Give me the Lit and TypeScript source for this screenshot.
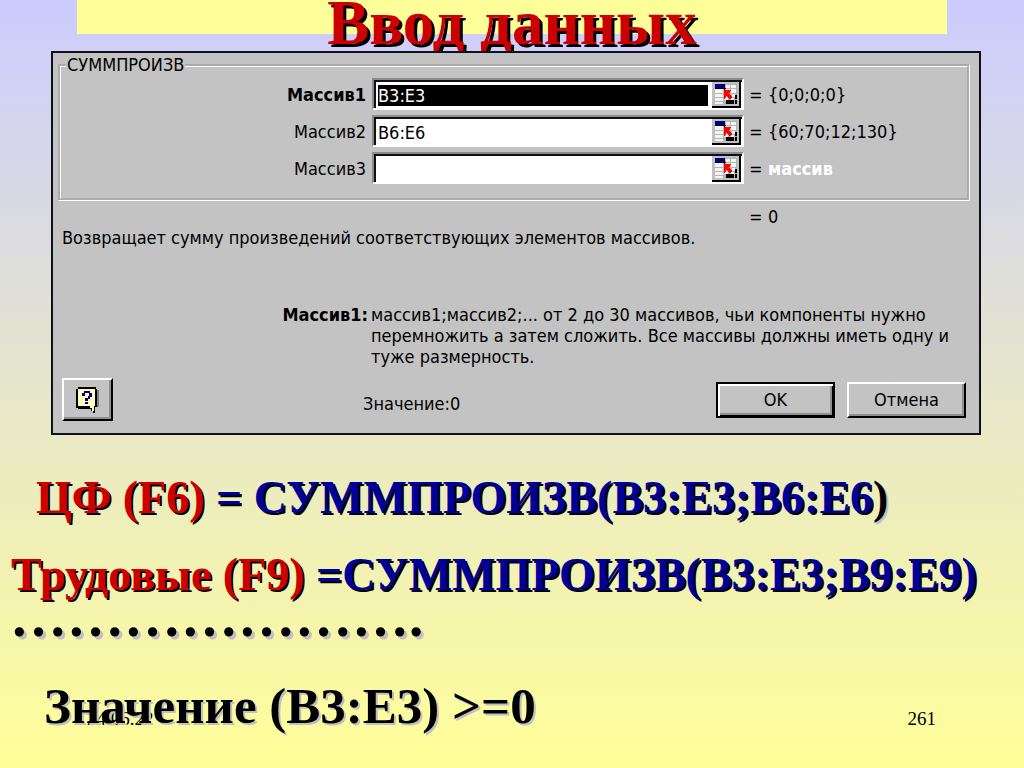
import { LitElement, html, css, svg } from "lit";
import { customElement } from "lit/decorators.js";

interface Argument {
  name: string;
  value: string;
  result: string;
  state: string;
}

const ARGUMENTS: Argument[] = [
  { name: "Массив1", value: "B3:E3", result: "{0;0;0;0}", state: "required" },
  { name: "Массив2", value: "B6:E6", result: "{60;70;12;130}", state: "" },
  { name: "Массив3", value: "", result: "массив", state: "empty" },
];

const rangeIcon = svg`
  <rect width="27" height="24" fill="#c0c0c0"/>
  <rect x="3" y="2" width="22" height="20" fill="#b4b4b4"/>
  <path fill="#f4f4f4" d="M3 7h8v4H3zM3 12h8v3H3zM3 16h8v3H3zM3 20h8v2H3zM14 3h4v3h-4zM19 3h5v3h-5zM14 7h4v3h-4zM19 7h5v4h-5zM20 12h3v3h-3zM12 12h4v6h-4zM19 16h3v2h-3z"/>
  <path fill="#000080" d="M3 2h10v4H3z"/>
  <path fill="#000" d="M3 6h11v1H3zM12 4h1v5h-1zM14 18h8v4h-8zM23 13h2v4h-2zM23 18h2v4h-2z"/>
  <path fill="#f00" d="M12 8h7v1h-1v2h-1v1h1v1h1v1h1v2h-1v1h-2v-1h-1v-1h-1v-1h-1v2h-1v1h-1z"/>`;

const helpIcon = svg`
  <path fill="#808080" d="M4 3h19v17H4z"/>
  <path fill="#000" d="M2 0h18v2h1v18h-2v6h-2v-2h-2v-2H2v-1H0V2h2z"/>
  <path fill="#ffffb8" d="M2 2h17v17h-1v5h-2v-3h-2v-2H2z"/>
  <path fill="#fff" d="M4 3h2v2H4zM3 8h2v2H3zM5 13h2v2H5zM9 18h3v1H9zM15 14h2v2h-2zM16 9h2v2h-2zM15 3h2v2h-2z"/>
  <path fill="#000080" d="M6 6h2V4h6v2h2v4h-2v2h-2v2H9v-3h3V9h1V6H9v3H6zM9 15h3v2H9z"/>`;

@customElement("app-root")
export class AppRoot extends LitElement {
  static styles = css`
    :host {
      display: block;
    }
    * {
      box-sizing: border-box;
    }
    .slide {
      position: relative;
      isolation: isolate;
      display: flow-root;
      min-height: 100vh;
      background: linear-gradient(#ccccff, #ffff99);
      font-family: "Liberation Serif", serif;
      overflow: hidden;
    }
    .band {
      display: flex;
      justify-content: center;
      align-items: flex-end;
      height: 34px;
      margin: 0 77px;
      background: #ffff99;
    }
    .title {
      flex: none;
      margin: 0 0 -12px;
      line-height: 46px;
      font-size: 63px;
      color: #cc0000;
      text-shadow: 3px 3px 0 #000;
      white-space: nowrap;
    }
    .dialog {
      position: relative;
      margin: 17px 43px 0 51px;
      padding: 4px 9px 12px 5px;
      border: 2px solid #101018;
      background: #c3c3c3;
      color: #000;
      font: 18px/21px "DejaVu Sans Condensed", "DejaVu Sans", sans-serif;
      font-stretch: condensed;
    }
    .group {
      margin: 0;
      padding: 5px 0 14px;
      border: 3px groove #fff;
      min-width: 0;
    }
    .legend {
      margin-left: 5px;
      padding: 0 1px;
      line-height: 16px;
    }
    .row {
      display: grid;
      grid-template-columns: 311fr 372fr 223fr;
      align-items: center;
      margin-bottom: 5px;
    }
    .row:last-child {
      margin-bottom: 0;
    }
    .name {
      padding-right: 6px;
      text-align: right;
    }
    .required .name,
    .empty .value {
      font-weight: bold;
    }
    .empty .value {
      color: #fff;
    }
    .well {
      display: flex;
      align-items: center;
      height: 32px;
      padding: 2px 1px 0 2px;
      border: 2px solid;
      border-color: #8c8c8c #fff #fff #8c8c8c;
      box-shadow: inset 2px 2px 0 #101010;
      background: #fff;
    }
    .field {
      flex: 1;
      min-width: 0;
      height: 21px;
      margin: 0 4px 0 2px;
      padding: 0;
      border: 0;
      outline: 0;
      background: #fff;
      color: #000;
      font: inherit;
    }
    .required .field {
      background: #000;
      color: #fff;
    }
    .pick {
      display: block;
      width: 29px;
      height: 26px;
      padding: 0;
      border: 0;
      border-right: 2px solid #000;
      border-bottom: 2px solid #000;
      background: #c0c0c0;
    }
    .pick svg {
      display: block;
      width: 27px;
      height: 24px;
    }
    .result {
      display: grid;
      grid-template-columns: 19px 1fr;
      padding-left: 5px;
    }
    .total {
      display: grid;
      grid-template-columns: 311fr 372fr 223fr;
      padding: 5px 3px 0;
    }
    .total .result {
      grid-column: 3;
    }
    .about {
      margin: 0 0 56px 4px;
    }
    .hint {
      display: grid;
      grid-template-columns: 310px 1fr;
      column-gap: 3px;
      margin: 0 5px 0 0;
    }
    .hint dt {
      text-align: right;
      font-weight: bold;
    }
    .hint dd {
      margin: 0;
    }
    .actions {
      display: flex;
      align-items: center;
      gap: 12px;
      margin: 11px 4px 0;
    }
    .answer {
      flex: 1;
      padding: 8px 0 0 238px;
    }
    .button {
      width: 119px;
      height: 36px;
      padding: 0;
      border: 2px solid;
      border-color: #fff #000 #000 #fff;
      border-radius: 0;
      box-shadow: inset -2px -2px 0 #909090;
      background: #c3c3c3;
      color: #000;
      font: inherit;
    }
    .default {
      border-color: #000;
      box-shadow: inset 2px 2px 0 #fff, inset -1px -1px 0 #000, inset -3px -3px 0 #909090;
    }
    .help {
      display: grid;
      place-items: center;
      width: 51px;
      height: 43px;
    }
    .help svg {
      width: 24px;
      height: 26px;
    }
    .formula {
      margin: 0;
      font-weight: bold;
      font-size: 46px;
      line-height: 54px;
      color: #000099;
      text-shadow: 2px 2px 0 #000;
      white-space: nowrap;
    }
    .objective {
      padding: 36px 0 0 36px;
    }
    .labour {
      padding: 23px 0 0 11px;
    }
    .target {
      color: #cc0000;
    }
    .plain {
      color: #000;
      text-shadow: 2px 2px 0 #c0c0c0;
    }
    .dots {
      padding-left: 10px;
      font-size: 57px;
      line-height: 30px;
      text-shadow: 3px 3px 0 #c0c0c0;
    }
    .bound {
      padding: 44px 0 0 44px;
      font-size: 51px;
      line-height: 60px;
    }
    .footer {
      position: absolute;
      z-index: -1;
      inset: auto 88px 38px 87px;
      display: flex;
      justify-content: space-between;
      font-size: 19px;
      line-height: 22px;
      color: #000;
    }
  `;

  private renderArgument(arg: Argument, index: number) {
    const id = `argument-${index}`;
    return html`
      <div class="row ${arg.state}">
        <label class="name" for=${id}>${arg.name}</label>
        <div class="well">
          <input class="field" id=${id} type="text" .value=${arg.value} />
          <button class="pick" type="button" aria-label="Выбрать диапазон">
            <svg viewBox="0 0 27 24" shape-rendering="crispEdges">${rangeIcon}</svg>
          </button>
        </div>
        <div class="result"><span>=</span><span class="value">${arg.result}</span></div>
      </div>
    `;
  }

  render() {
    return html`
      <main class="slide">
        <header class="band"><h1 class="title">Ввод данных</h1></header>
        <form class="dialog" @submit=${(e: Event) => e.preventDefault()}>
          <fieldset class="group">
            <legend class="legend">СУММПРОИЗВ</legend>
            ${ARGUMENTS.map((arg, i) => this.renderArgument(arg, i))}
          </fieldset>
          <div class="total">
            <div class="result"><span>=</span><span>0</span></div>
          </div>
          <p class="about">Возвращает сумму произведений соответствующих элементов массивов.</p>
          <dl class="hint">
            <dt>Массив1:</dt>
            <dd>
              массив1;массив2;... от 2 до 30 массивов, чьи компоненты нужно
              перемножить а затем сложить. Все массивы должны иметь одну и
              туже размерность.
            </dd>
          </dl>
          <div class="actions">
            <button class="button help" type="button" aria-label="Справка">
              <svg viewBox="0 0 24 26" shape-rendering="crispEdges">${helpIcon}</svg>
            </button>
            <span class="answer">Значение:0</span>
            <button class="button default" type="submit">OK</button>
            <button class="button" type="button">Отмена</button>
          </div>
        </form>
        <p class="formula objective"><span class="target">ЦФ (F6)</span> = СУММПРОИЗВ(B3:E3;B6:E6<span class="plain">)</span></p>
        <p class="formula labour"><span class="target">Трудовые (F9)</span> =СУММПРОИЗВ(B3:E3;B9:E9)</p>
        <p class="formula plain dots">………………….</p>
        <p class="formula plain bound">Значение (B3:E3) &gt;=0</p>
        <footer class="footer"><span>24.06.22</span><span>261</span></footer>
      </main>
    `;
  }
}
